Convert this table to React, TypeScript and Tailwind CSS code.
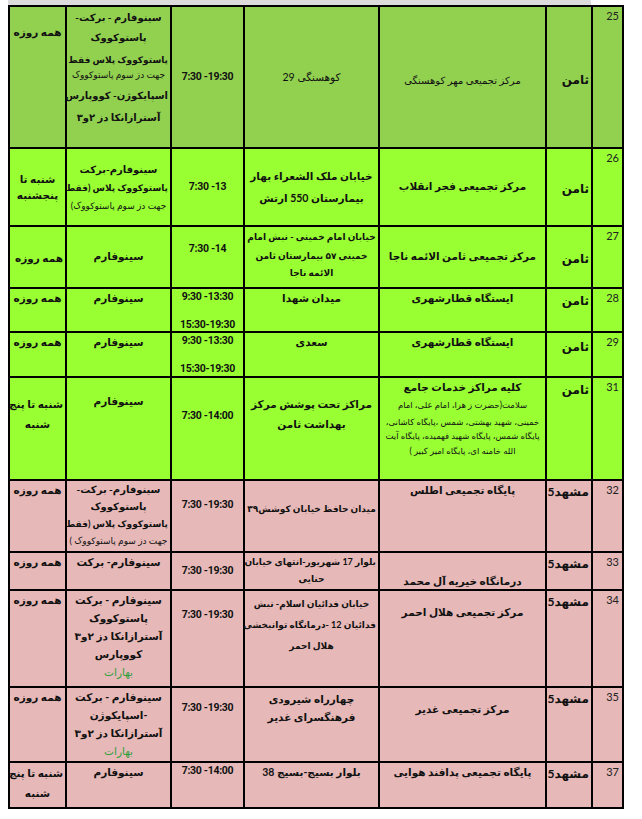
import type { ReactNode } from "react";

type VAlign = "top" | "middle" | "bottom";

function Td({
  v = "middle",
  className = "",
  children,
}: {
  v?: VAlign;
  className?: string;
  children?: ReactNode;
}) {
  const va = v === "top" ? "align-top" : v === "bottom" ? "align-bottom" : "align-middle";
  return <td className={`border-2 border-black px-[2px] text-center ${va} ${className}`}>{children}</td>;
}

function Lines({ items, lead = "leading-[20px]" }: { items: ReactNode[]; lead?: string }) {
  return (
    <div className={`whitespace-nowrap ${lead}`}>
      {items.map((line, i) => (
        <div key={i}>{line}</div>
      ))}
    </div>
  );
}

function Num({ n }: { n: number }) {
  return (
    <Td v="top" className="pr-[3px] pt-[1px] text-right font-['Lato',sans-serif] text-[11px] font-normal leading-[16px] text-[#222]">
      {n}
    </Td>
  );
}

function City({ name, v = "top", className = "" }: { name: string; v?: VAlign; className?: string }) {
  return (
    <Td v={v} className={`whitespace-nowrap pr-[2px] text-right text-[12px] font-bold ${className}`}>
      {name === "mashhad" ? (
        <span>
          مشهد<span className="font-['Lato',sans-serif]">5</span>
        </span>
      ) : (
        "ثامن"
      )}
    </Td>
  );
}

function Hours({ text, className = "" }: { text: string; className?: string }) {
  return (
    <div dir="ltr" className={`font-['Roboto',sans-serif] text-[10.5px] font-bold tracking-[-0.3px] ${className}`}>
      {text}
    </div>
  );
}

const green = "bg-[#92d050]";
const lime = "bg-[#99ff33]";
const pink = "bg-[#e6b8b7]";
const bahar = <span className="font-normal text-[#2e9e3e]">بهارات</span>;

export default function App() {
  return (
    <div className="min-h-[819px] w-[642px] bg-white">
      <div className="ml-[8px] h-[5px] w-[583px] bg-[#dcdcdc]" />
      <div className="pl-[8px]">
        <table
          dir="rtl"
          className="w-[614px] table-fixed border-collapse font-['Lato','DejaVu_Sans',sans-serif] text-[10.5px] font-bold text-[#111]"
        >
          <colgroup>
            <col className="w-[31px]" />
            <col className="w-[46px]" />
            <col className="w-[167px]" />
            <col className="w-[135px]" />
            <col className="w-[73px]" />
            <col className="w-[105px]" />
            <col className="w-[57px]" />
          </colgroup>
          <tbody>
            {/* 25 */}
            <tr className={`h-[142px] ${green}`}>
              <Num n={25} />
              <City name="samen" v="middle" className="pt-[6px]" />
              <Td className="pt-[6px] text-[10px] font-normal">مرکز تجمیعی مهر کوهسنگی</Td>
              <Td className="pt-[2px] font-normal">کوهسنگی 29</Td>
              <Td>
                <Hours text="7:30 -19:30" />
              </Td>
              <Td v="top" className="pt-0 text-[10px]">
                <div className="whitespace-nowrap">
                  <div className="leading-[20px]">سینوفارم - برکت-</div>
                  <div className="leading-[20px]">پاستوکووک</div>
                  <div className="mt-[5px] text-[9px] leading-[16px]">پاستوکووک پلاس فقط</div>
                  <div className="text-[9px] font-normal leading-[14px]">جهت دز سوم پاستوکووک</div>
                  <div className="mt-[3px] leading-[20px]">اسپایکوژن- کووپارس</div>
                  <div className="mt-[2px] leading-[20px]">آسترازانکا دز ۲و۳</div>
                </div>
              </Td>
              <Td v="top" className="pt-[18px]">
                همه روزه
              </Td>
            </tr>

            {/* 26 */}
            <tr className={`h-[78px] ${lime}`}>
              <Num n={26} />
              <City name="samen" v="middle" className="pt-[4px]" />
              <Td>مرکز تجمیعی فجر انقلاب</Td>
              <Td>
                <Lines lead="leading-[22px]" items={["خیابان ملک الشعراء بهار", "بیمارستان 550 ارتش"]} />
              </Td>
              <Td>
                <Hours text="7:30 -13" />
              </Td>
              <Td className="text-[9px]">
                <Lines
                  lead="leading-[18px]"
                  items={[
                    <span className="text-[10px]">سینوفارم-برکت</span>,
                    "پاستوکووک پلاس (فقط",
                    <span className="font-normal">جهت دز سوم پاستوکووک)</span>,
                  ]}
                />
              </Td>
              <Td>
                <Lines lead="leading-[16px]" items={["شنبه تا", "پنجشنبه"]} />
              </Td>
            </tr>

            {/* 27 */}
            <tr className={`h-[62px] ${lime}`}>
              <Num n={27} />
              <City name="samen" v="middle" className="pt-[4px]" />
              <Td>مرکز تجمیعی ثامن  الائمه ناجا</Td>
              <Td v="top" className="pt-0 text-[9px]">
                <div className="whitespace-nowrap">
                  <div className="leading-[20px]">خیابان امام خمینی - نبش امام</div>
                  <div className="leading-[18px]">خمینی ۵۷ بیمارستان ثامن</div>
                  <div className="leading-[16px]">الائمه ناجا</div>
                </div>
              </Td>
              <Td v="top" className="pt-[14px]">
                <Hours text="7:30 -14" />
              </Td>
              <Td>سینوفارم</Td>
              <Td className="pt-[4px] text-right">همه روزه</Td>
            </tr>

            {/* 28 */}
            <tr className={`h-[43px] ${lime}`}>
              <Num n={28} />
              <City name="samen" v="top" className="pt-[3px]" />
              <Td v="top" className="pt-[2px]">
                ایستگاه قطارشهری
              </Td>
              <Td v="top" className="pt-[2px]">
                میدان شهدا
              </Td>
              <Td v="top" className="pt-0">
                <Hours text="9:30 -13:30" className="leading-[15px]" />
                <Hours text="15:30-19:30" className="mt-[14px] leading-[13px]" />
              </Td>
              <Td v="top" className="pt-[2px]">
                سینوفارم
              </Td>
              <Td v="top" className="pt-[2px]">
                همه روزه
              </Td>
            </tr>

            {/* 29 */}
            <tr className={`h-[45px] ${lime}`}>
              <Num n={29} />
              <City name="samen" v="top" className="pt-[5px]" />
              <Td v="top" className="pt-[2px]">
                ایستگاه قطارشهری
              </Td>
              <Td v="top" className="pt-[2px]">
                سعدی
              </Td>
              <Td v="top" className="pt-0">
                <Hours text="9:30 -13:30" className="leading-[15px]" />
                <Hours text="15:30-19:30" className="mt-[14px] leading-[13px]" />
              </Td>
              <Td v="top" className="pt-[2px]">
                سینوفارم
              </Td>
              <Td v="top" className="pt-[2px]">
                همه روزه
              </Td>
            </tr>

            {/* 31 */}
            <tr className={`h-[103px] ${lime}`}>
              <Num n={31} />
              <City name="samen" v="top" className="pt-[3px]" />
              <Td v="top" className="pt-0">
                <div className="leading-[18px]">کلیه مراکز خدمات جامع</div>
                <div className="whitespace-nowrap text-[8.5px] font-normal">
                  <div className="leading-[18px]">سلامت(حضرت ز هرا، امام علی، امام</div>
                  <div className="leading-[16px]">خمینی، شهید بهشتی، شمس ،پایگاه کاشانی،</div>
                  <div className="leading-[12px]">پایگاه شمس، پایگاه شهید فهمیده، پایگاه آیت</div>
                  <div className="leading-[18px]">الله خامنه ای، پایگاه امیر کبیر )</div>
                </div>
              </Td>
              <Td v="top" className="pt-[16px]">
                <Lines lead="leading-[20px]" items={["مراکز تحت پوشش مرکز", "بهداشت ثامن"]} />
              </Td>
              <Td v="top" className="pt-[30px]">
                <Hours text="7:30 -14:00" />
              </Td>
              <Td v="top" className="pt-[16px]">
                سینوفارم
              </Td>
              <Td v="top" className="pt-[16px]">
                <Lines lead="leading-[20px]" items={["شنبه تا پنج", "شنبه"]} />
              </Td>
            </tr>

            {/* 32 */}
            <tr className={`h-[72px] ${pink}`}>
              <Num n={32} />
              <City name="mashhad" v="top" className="pt-[2px]" />
              <Td v="top" className="pt-[2px]">
                پایگاه تجمیعی اطلس
              </Td>
              <Td v="top" className="whitespace-nowrap pt-[21px] text-[9px] tracking-[-0.2px]">
                میدان حافظ خیابان کوشش۳۹
              </Td>
              <Td v="top" className="pt-[16px]">
                <Hours text="7:30 -19:30" />
              </Td>
              <Td v="top" className="pt-0 text-[9px]">
                <Lines
                  lead="leading-[17px]"
                  items={[
                    <span className="text-[10px]">سینوفارم- برکت-</span>,
                    <span className="text-[10px]">پاستوکووک</span>,
                    "پاستوکووک پلاس (فقط",
                    <span className="font-normal">جهت دز سوم پاستوکووک )</span>,
                  ]}
                />
              </Td>
              <Td v="top" className="pt-[2px]">
                همه روزه
              </Td>
            </tr>

            {/* 33 */}
            <tr className={`h-[38px] ${pink}`}>
              <Num n={33} />
              <City name="mashhad" v="top" className="pt-[2px]" />
              <Td v="bottom" className="pb-0 leading-[16px]">
                درمانگاه خیریه آل محمد
              </Td>
              <Td v="top" className="pt-0 text-[9px] tracking-[-0.2px]">
                <Lines lead="leading-[17px]" items={["بلوار 17 شهریور-انتهای خیابان", "حنایی"]} />
              </Td>
              <Td>
                <Hours text="7:30 -19:30" />
              </Td>
              <Td v="top" className="pt-[2px]">
                سینوفارم- برکت
              </Td>
              <Td v="top" className="pt-[2px]">
                همه روزه
              </Td>
            </tr>

            {/* 34 */}
            <tr className={`h-[97px] ${pink}`}>
              <Num n={34} />
              <City name="mashhad" v="top" className="pt-[2px]" />
              <Td v="top" className="pt-[14px]">
                مرکز تجمیعی هلال احمر
              </Td>
              <Td v="top" className="pt-[2px] text-[9px] tracking-[-0.2px]">
                <Lines lead="leading-[21px]" items={["خیابان فدائیان اسلام- نبش", "فدائیان 12 -درمانگاه توانبخشی", "هلال احمر"]} />
              </Td>
              <Td v="top" className="pt-[16px]">
                <Hours text="7:30 -19:30" />
              </Td>
              <Td v="top" className="pt-0">
                <Lines
                  lead="leading-[18px]"
                  items={["سینوفارم  - برکت", "پاستوکووک", "آسترازانکا دز ۲و۳", "کووپارس", bahar]}
                />
              </Td>
              <Td v="top" className="pt-[2px]">
                همه روزه
              </Td>
            </tr>

            {/* 35 */}
            <tr className={`h-[75px] ${pink}`}>
              <Num n={35} />
              <City name="mashhad" v="top" className="pt-[2px]" />
              <Td v="top" className="pt-[14px]">
                مرکز تجمیعی غدیر
              </Td>
              <Td v="top" className="pt-[2px]">
                <Lines lead="leading-[18px]" items={["چهارراه شیرودی", "فرهنگسرای غدیر"]} />
              </Td>
              <Td v="top" className="pt-[12px]">
                <Hours text="7:30 -19:30" />
              </Td>
              <Td v="top" className="pt-0">
                <Lines lead="leading-[18px]" items={["سینوفارم - برکت", "-اسپایکوژن", "آسترازانکا دز ۲و۳", bahar]} />
              </Td>
              <Td v="top" className="pt-[2px]">
                همه روزه
              </Td>
            </tr>

            {/* 37 */}
            <tr className={`h-[46px] ${pink}`}>
              <Num n={37} />
              <City name="mashhad" v="top" className="pt-[2px]" />
              <Td v="top" className="pt-[2px]">
                پایگاه تجمیعی پدافند هوایی
              </Td>
              <Td v="top" className="pt-[2px]">
                بلوار بسیج-بسیج 38
              </Td>
              <Td v="top" className="pt-0">
                <Hours text="7:30 -14:00" />
              </Td>
              <Td v="top" className="pt-[2px]">
                سینوفارم
              </Td>
              <Td v="top" className="pt-0">
                <Lines lead="leading-[20px]" items={["شنبه تا پنج", "شنبه"]} />
              </Td>
            </tr>
          </tbody>
        </table>
      </div>
    </div>
  );
}
